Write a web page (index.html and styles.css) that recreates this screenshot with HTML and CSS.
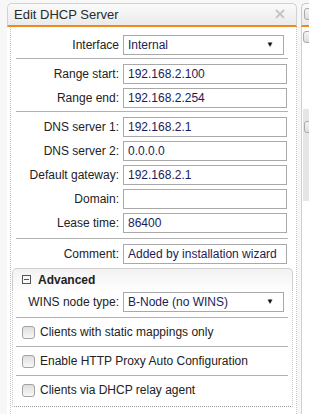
FILE: index.html
```html
<!DOCTYPE html>
<html lang="en">
<head>
    <meta charset="UTF-8">
    <title>Edit DHCP Server</title>
    <link rel="stylesheet" href="styles.css">
</head>
<body>
    <div class="page">
        <div class="gutter"></div>

        <div class="dialog">
            <div class="dialog-title">
                <span>Edit DHCP Server</span>
                <svg class="close" width="10" height="10" viewBox="0 0 10 10">
                    <path d="M1 1L9 9M9 1L1 9" stroke="#c6c6c6" stroke-width="2"/>
                </svg>
            </div>
            <div class="dialog-body">
                <div class="form">
                    <div class="row">
                        <label>Interface</label>
                        <div class="select">Internal<span class="arrow">▼</span></div>
                    </div>
                    <div class="sep"></div>
                    <div class="row">
                        <label>Range start:</label>
                        <div class="field">192.168.2.100</div>
                    </div>
                    <div class="row">
                        <label>Range end:</label>
                        <div class="field">192.168.2.254</div>
                    </div>
                    <div class="sep"></div>
                    <div class="row">
                        <label>DNS server 1:</label>
                        <div class="field">192.168.2.1</div>
                    </div>
                    <div class="row">
                        <label>DNS server 2:</label>
                        <div class="field">0.0.0.0</div>
                    </div>
                    <div class="row">
                        <label>Default gateway:</label>
                        <div class="field">192.168.2.1</div>
                    </div>
                    <div class="row">
                        <label>Domain:</label>
                        <div class="field"></div>
                    </div>
                    <div class="row">
                        <label>Lease time:</label>
                        <div class="field">86400</div>
                    </div>
                    <div class="sep sep-wide"></div>
                    <div class="row">
                        <label>Comment:</label>
                        <div class="field">Added by installation wizard</div>
                    </div>

                    <div class="fieldset">
                        <div class="legend"><span class="toggle"></span>Advanced</div>
                        <div class="fs-body">
                            <div class="row">
                                <label>WINS node type:</label>
                                <div class="select">B-Node (no WINS)<span class="arrow">▼</span></div>
                            </div>
                            <div class="sep sep-tight"></div>
                            <div class="check-row"><span class="checkbox"></span>Clients with static mappings only</div>
                            <div class="sep sep-flat"></div>
                            <div class="check-row"><span class="checkbox"></span>Enable HTTP Proxy Auto Configuration</div>
                            <div class="sep sep-flat"></div>
                            <div class="check-row"><span class="checkbox"></span>Clients via DHCP relay agent</div>
                        </div>
                    </div>
                </div>
            </div>
        </div>

        <div class="side">
            <div class="side-title"><span class="side-btn"></span></div>
            <div class="side-body">
                <span class="side-btn"></span>
                <div class="side-block"><span class="side-btn"></span></div>
            </div>
        </div>
    </div>
</body>
</html>
```

FILE: styles.css
```css
body {
    margin: 0;
    font-family: "Liberation Sans", Arial, sans-serif;
    font-size: 12px;
    color: #222;
    background-color: #f7f7f7;
    overflow: hidden;
}

.page {
    display: flex;
    height: 411px;
    padding-top: 3px;
}

.gutter {
    width: 7px;
    flex: none;
}

.dialog {
    width: 290px;
    flex: none;
    display: flex;
    flex-direction: column;
}

.dialog-title {
    height: 21px;
    line-height: 22px;
    padding: 0 11px 0 6px;
    border: 1px solid #d2d2d2;
    border-bottom: 2px solid #f08a1c;
    border-radius: 5px 5px 0 0;
    background: linear-gradient(#fafafa, #ebebeb);
    font-size: 13px;
    color: #2a2a2a;
    display: flex;
    justify-content: space-between;
    align-items: center;
}

.close {
    margin-top: -1px;
}

.dialog-body {
    flex: 1;
    background-color: #fff;
    padding-left: 3px;
    display: flex;
}

.form {
    flex: 1;
    padding: 6px 8px 0 5px;
    border-left: 1px dotted #c4c4c4;
    border-right: 1px dotted #c4c4c4;
}

.row {
    display: flex;
    align-items: center;
    height: 24px;
}

.row label {
    width: 103px;
    flex: none;
    text-align: right;
}

.field,
.select {
    box-sizing: border-box;
    height: 20px;
    margin-left: 4px;
    padding: 0 4px;
    border: 1px solid #a9a9a9;
    line-height: 18px;
    color: #1c1c58;
    background-color: #fff;
}

.field {
    width: 164px;
}

.select {
    width: 161px;
    padding-right: 9px;
    display: flex;
    justify-content: space-between;
}

.arrow {
    font-size: 8px;
    color: #111;
}

.sep {
    height: 1px;
    background-color: #b2b2b2;
    margin: 1px 0 3px;
}

.sep-wide {
    margin: 3px 0 3px;
}

.sep-tight {
    margin: 3px 0 0;
}

.sep-flat {
    margin: 0;
}

.fieldset {
    margin: 2px -5px 0 -4px;
}

.legend {
    height: 21px;
    line-height: 22px;
    padding-left: 9px;
    border: 1px solid #cfcfcf;
    border-bottom: none;
    border-radius: 5px 5px 0 0;
    background: linear-gradient(#f3f3f3, #fdfdfd);
    font-weight: bold;
    display: flex;
    align-items: center;
}

.toggle {
    width: 7px;
    height: 7px;
    border: 1px solid #555;
    margin-right: 7px;
    background: linear-gradient(#555, #555) center / 5px 1px no-repeat;
}

.fs-body {
    padding: 0 4px 2px 3px;
    border: 1px dotted #c8c8c8;
    border-top: none;
    border-bottom-color: #9a9a9a;
}

.check-row {
    height: 28px;
    display: flex;
    align-items: center;
    padding-left: 6px;
}

.checkbox {
    box-sizing: border-box;
    width: 13px;
    height: 13px;
    margin-right: 5px;
    border: 1px solid #a2a2a2;
    border-radius: 3px;
    background: linear-gradient(#dedede, #f8f8f8);
}

.side {
    flex: 1;
    margin-left: 4px;
    display: flex;
    flex-direction: column;
}

.side-title {
    box-sizing: border-box;
    height: 24px;
    border: 1px solid #c8c8c8;
    border-right: none;
    border-bottom: 2px solid #f08a1c;
    border-radius: 5px 0 0 0;
    background: linear-gradient(#fafafa, #ebebeb);
    padding: 4px 0 0 2px;
}

.side-body {
    flex: 1;
    background-color: #fff;
    border-left: 1px solid #d0d0d0;
    padding: 4px 0 0 1px;
}

.side-btn {
    display: block;
    width: 12px;
    height: 12px;
    border: 1px solid #aaa;
    border-radius: 3px;
    box-sizing: border-box;
    background: linear-gradient(#f4f4f4, #ddd);
}

.side-block {
    margin-top: 66px;
    height: 80px;
    background-color: #e6e6e6;
    padding: 12px 0 0 1px;
}
```
